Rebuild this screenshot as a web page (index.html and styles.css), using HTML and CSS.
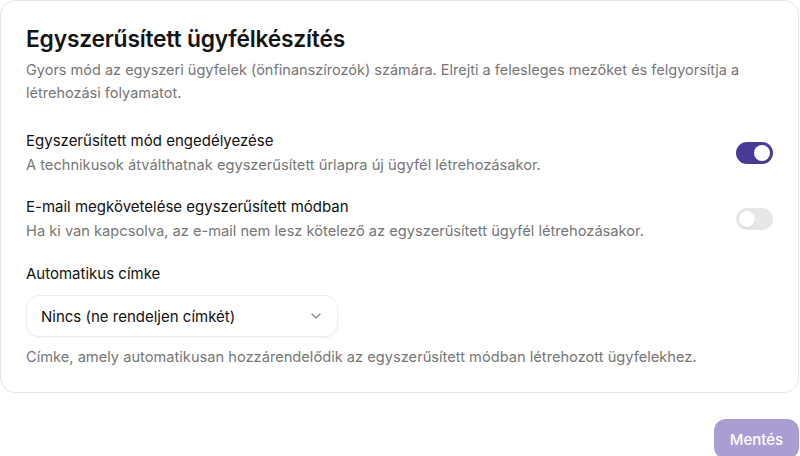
FILE: index.html
```html
<!DOCTYPE html>
<html lang="hu">
<head>
<meta charset="utf-8">
<title>Egyszerűsített ügyfélkészítés</title>
<link rel="stylesheet" href="styles.css">
</head>
<body>
<div class="page">
  <section class="card">
    <h1 class="title">Egyszerűsített ügyfélkészítés</h1>
    <p class="desc">Gyors mód az egyszeri ügyfelek (önfinanszírozók) számára. Elrejti a felesleges mezőket és felgyorsítja a létrehozási folyamatot.</p>

    <div class="row row-first">
      <div class="row-text">
        <div class="label">Egyszerűsített mód engedélyezése</div>
        <div class="sub">A technikusok átválthatnak egyszerűsített űrlapra új ügyfél létrehozásakor.</div>
      </div>
      <span class="toggle on"><span class="knob"></span></span>
    </div>

    <div class="row row-second">
      <div class="row-text">
        <div class="label">E-mail megkövetelése egyszerűsített módban</div>
        <div class="sub">Ha ki van kapcsolva, az e-mail nem lesz kötelező az egyszerűsített ügyfél létrehozásakor.</div>
      </div>
      <span class="toggle off"><span class="knob"></span></span>
    </div>

    <div class="field">
      <div class="label">Automatikus címke</div>
      <div class="select">
        <span>Nincs (ne rendeljen címkét)</span>
        <svg class="chev" width="10" height="6" viewBox="0 0 10 6"><path d="M1 1l4 4 4-4" fill="none" stroke="#8a8a8a" stroke-width="1.3" stroke-linecap="round" stroke-linejoin="round"/></svg>
      </div>
      <div class="sub help">Címke, amely automatikusan hozzárendelődik az egyszerűsített módban létrehozott ügyfelekhez.</div>
    </div>
  </section>

  <div class="actions">
    <button class="save">Mentés</button>
  </div>
</div>
</body>
</html>
```

FILE: styles.css
```css
* { box-sizing: border-box; }
html, body { margin: 0; padding: 0; background: #ffffff; }
body {
  font-family: Inter, "Noto Sans", "Liberation Sans", sans-serif;
  color: #1a1a1a;
  overflow: hidden;
}
.page { width: 799px; }
.card {
  border: 1px solid #e6e6e6;
  border-radius: 15px;
  padding: 23px 25px 24px 25px;
  background: #fff;
}
.title {
  margin: 0;
  font-size: 22.8px;
  line-height: 30px;
  font-weight: 600;
  color: #141414;
  letter-spacing: -0.2px;
}
.desc {
  margin: 4px 0 0;
  font-size: 14.5px;
  line-height: 23px;
  color: #767676;
}
.row {
  display: flex;
  align-items: center;
  justify-content: space-between;
}
.row-first { margin-top: 26px; }
.row-second { margin-top: 20px; }
.label {
  font-size: 15px;
  line-height: 22px;
  color: #111111;
  font-weight: 400;
}
.sub {
  margin-top: 2px;
  font-size: 14.65px;
  line-height: 22px;
  color: #767676;
}
.toggle {
  width: 37px;
  height: 22px;
  border-radius: 11px;
  display: flex;
  align-items: center;
  padding: 3px;
  flex-shrink: 0;
}
.toggle.on { background: #4b3a95; justify-content: flex-end; }
.toggle.off { background: #e7e7e7; justify-content: flex-start; }
.knob {
  width: 16px;
  height: 16px;
  border-radius: 50%;
  background: #fff;
}
.toggle.off .knob { box-shadow: 0 1px 2px rgba(0,0,0,0.08); }
.field { margin-top: 21px; }
.select {
  margin-top: 10px;
  width: 312px;
  height: 42px;
  border: 1px solid #ececec;
  border-radius: 13px;
  display: flex;
  align-items: center;
  justify-content: space-between;
  padding: 0 16px 0 14px;
  font-size: 15px;
  color: #111111;
  box-shadow: 0 1px 2px rgba(0,0,0,0.04);
}
.chev { display: block; }
.help { margin-top: 9px; }
.actions {
  display: flex;
  justify-content: flex-end;
  margin-top: 26px;
}
.save {
  width: 85px;
  height: 40px;
  border: none;
  border-radius: 12px;
  background: #a99dd2;
  color: #fff;
  font-family: inherit;
  font-size: 15px;
  font-weight: 500;
}
```
